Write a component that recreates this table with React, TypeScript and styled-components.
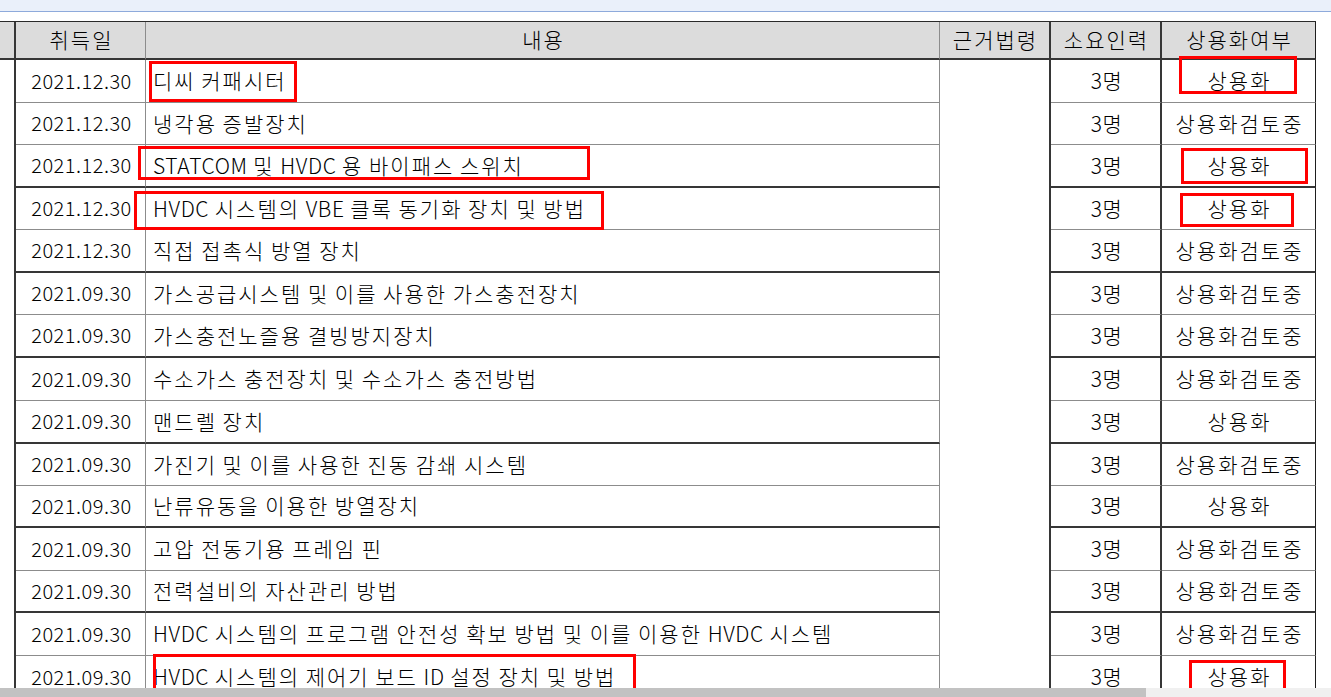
import React from 'react'
import styled, { createGlobalStyle } from 'styled-components'

const GlobalStyle = createGlobalStyle`
  html, body {
    margin: 0;
    padding: 0;
    background: #ffffff;
  }
  * {
    box-sizing: border-box;
  }
`

const Page = styled.div`
  position: relative;
  width: 1331px;
  height: 697px;
  overflow: hidden;
  background: #ffffff;
  font-family: 'Noto Sans CJK KR', 'Noto Sans', sans-serif;
  color: #000000;
`

const TopStrip = styled.div`
  height: 12px;
  background: #eaf0fa;
  border-bottom: 1px solid #8eaadb;
  margin-bottom: 9px;
`

const Grid = styled.div`
  display: grid;
  width: 1316px;
  grid-template-columns: 16px 130px 794px 111px 111px 154px;
  grid-template-rows: 38px 43px 42px 43px 42px 43px 42px 43px 43px 43px 42px 42px 43px 42px 43px 43px;
  border-top: 1px solid #2a2a2a;
`

type Edge = 'thin' | 'thick' | 'dark' | 'none'

const edge = (e: Edge) => {
  if (e === 'thick') return '2px solid #363636'
  if (e === 'dark') return '1px solid #1e1e1e'
  if (e === 'thin') return '1px solid #8c8c8c'
  return 'none'
}

const Cell = styled.div<{ $right: Edge; $bottom: Edge; $align?: 'left' | 'center' }>`
  display: flex;
  align-items: center;
  justify-content: ${({ $align }) => ($align === 'left' ? 'flex-start' : 'center')};
  padding: ${({ $align }) => ($align === 'left' ? '0 0 2px 7px' : '0 0 2px 2px')};
  border-right: ${({ $right }) => edge($right)};
  border-bottom: ${({ $bottom }) => edge($bottom)};
  font-size: 21px;
  font-weight: 300;
  letter-spacing: 2px;
  white-space: nowrap;
  overflow: hidden;
`

const HeadCell = styled(Cell)`
  background: #dcdcdc;
`

const DateCell = styled(Cell)`
  font-size: 20px;
  letter-spacing: 0.5px;
`

const ContentCell = styled(Cell)`
  word-spacing: -1px;
`

const ContentText = styled.span`
  white-space: pre;
`

const Latin = styled.span`
  letter-spacing: 0.6px;
`

const CountCell = styled(Cell)`
  letter-spacing: 0.5px;
`

const StubCell = styled.div`
  border-right: 2px solid #363636;
`

const LawCell = styled.div`
  grid-column: 4;
  grid-row: 2 / span 15;
  border-right: 2px solid #363636;
`

const Highlight = styled.div<{ $x: number; $y: number; $w: number; $h: number }>`
  position: absolute;
  left: ${({ $x }) => $x}px;
  top: ${({ $y }) => $y}px;
  width: ${({ $w }) => $w}px;
  height: ${({ $h }) => $h}px;
  border: 3px solid #ff0000;
  pointer-events: none;
`

const ScrollTrack = styled.div`
  position: absolute;
  left: 0;
  bottom: 0;
  width: 100%;
  height: 9px;
  background: #f0f0f0;
`

const ScrollThumb = styled.div`
  width: 1146px;
  height: 100%;
  background: #c2c2c2;
`

type Row = { date: string; content: string; count: string; status: string }

const rows: Row[] = [
  { date: '2021.12.30', content: '디씨 커패시터', count: '3명', status: '상용화' },
  { date: '2021.12.30', content: '냉각용 증발장치', count: '3명', status: '상용화검토중' },
  { date: '2021.12.30', content: 'STATCOM 및 HVDC 용 바이패스 스위치', count: '3명', status: '상용화' },
  { date: '2021.12.30', content: 'HVDC 시스템의 VBE 클록 동기화 장치 및 방법', count: '3명', status: '상용화' },
  { date: '2021.12.30', content: '직접 접촉식 방열 장치', count: '3명', status: '상용화검토중' },
  { date: '2021.09.30', content: '가스공급시스템 및 이를 사용한 가스충전장치', count: '3명', status: '상용화검토중' },
  { date: '2021.09.30', content: '가스충전노즐용 결빙방지장치', count: '3명', status: '상용화검토중' },
  { date: '2021.09.30', content: '수소가스 충전장치 및 수소가스 충전방법', count: '3명', status: '상용화검토중' },
  { date: '2021.09.30', content: '맨드렐 장치', count: '3명', status: '상용화' },
  { date: '2021.09.30', content: '가진기 및 이를 사용한 진동 감쇄 시스템', count: '3명', status: '상용화검토중' },
  { date: '2021.09.30', content: '난류유동을 이용한 방열장치', count: '3명', status: '상용화' },
  { date: '2021.09.30', content: '고압 전동기용 프레임 핀', count: '3명', status: '상용화검토중' },
  { date: '2021.09.30', content: '전력설비의 자산관리 방법', count: '3명', status: '상용화검토중' },
  { date: '2021.09.30', content: 'HVDC 시스템의 프로그램 안전성 확보 방법 및 이를 이용한 HVDC 시스템', count: '3명', status: '상용화검토중' },
  { date: '2021.09.30', content: 'HVDC 시스템의 제어기 보드 ID 설정 장치 및 방법', count: '3명', status: '상용화' },
]

// rows after which the horizontal rule is heavy
const heavyAfter = [3, 5, 7, 9, 11, 13]

const marks = [
  { x: 149, y: 61, w: 148, h: 41 },
  { x: 1179, y: 56, w: 118, h: 38 },
  { x: 138, y: 146, w: 452, h: 34 },
  { x: 1181, y: 148, w: 127, h: 36 },
  { x: 134, y: 191, w: 470, h: 39 },
  { x: 1180, y: 193, w: 114, h: 34 },
  { x: 153, y: 654, w: 483, h: 41 },
  { x: 1189, y: 660, w: 97, h: 35 },
]

// latin words are set tighter than hangul
function renderContent(text: string) {
  return text.split(/([A-Z]+)/).map((part, i) =>
    /^[A-Z]+$/.test(part) ? <Latin key={i}>{part}</Latin> : <React.Fragment key={i}>{part}</React.Fragment>
  )
}

export default function App() {
  return (
    <Page>
      <GlobalStyle />
      <TopStrip />
      <Grid>
        <HeadCell $right="thick" $bottom="thick" />
        <HeadCell $right="thin" $bottom="thick">취득일</HeadCell>
        <HeadCell $right="thin" $bottom="thick">내용</HeadCell>
        <HeadCell $right="thick" $bottom="thick">근거법령</HeadCell>
        <HeadCell $right="thick" $bottom="thick">소요인력</HeadCell>
        <HeadCell $right="dark" $bottom="thick">상용화여부</HeadCell>
        <LawCell />
        {rows.map((r, i) => {
          const b: Edge = heavyAfter.includes(i + 1) ? 'thick' : 'thin'
          return (
            <React.Fragment key={i}>
              <StubCell style={{ gridColumn: 1, gridRow: i + 2 }} />
              <DateCell $right="thin" $bottom={b} style={{ gridColumn: 2, gridRow: i + 2 }}>
                {r.date}
              </DateCell>
              <ContentCell $right="thin" $bottom={b} $align="left" style={{ gridColumn: 3, gridRow: i + 2 }}>
                <ContentText>{renderContent(r.content)}</ContentText>
              </ContentCell>
              <CountCell $right="thick" $bottom={b} style={{ gridColumn: 5, gridRow: i + 2 }}>
                {r.count}
              </CountCell>
              <Cell $right="dark" $bottom={b} style={{ gridColumn: 6, gridRow: i + 2 }}>
                {r.status}
              </Cell>
            </React.Fragment>
          )
        })}
      </Grid>
      {marks.map((m, i) => (
        <Highlight key={i} $x={m.x} $y={m.y} $w={m.w} $h={m.h} />
      ))}
      <ScrollTrack>
        <ScrollThumb />
      </ScrollTrack>
    </Page>
  )
}
